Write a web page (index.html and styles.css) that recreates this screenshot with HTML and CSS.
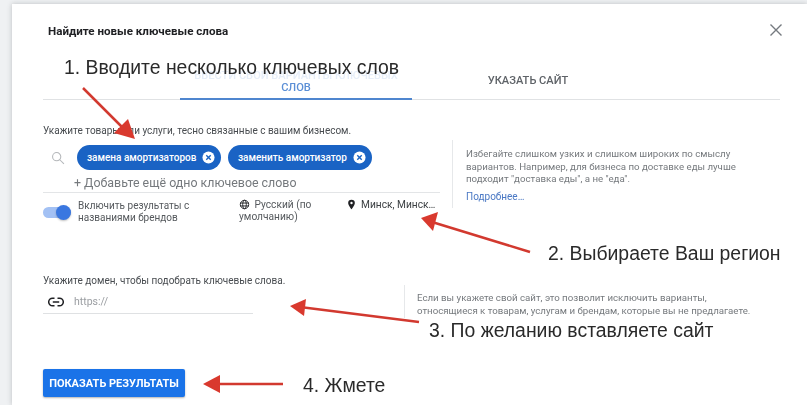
FILE: index.html
```html
<!DOCTYPE html>
<html lang="ru">
<head>
<meta charset="utf-8">
<title>Найдите новые ключевые слова</title>
<link rel="stylesheet" href="styles.css">
</head>
<body>
<main class="dialog">
  <header class="head">
    <h1 class="title">Найдите новые ключевые слова</h1>
    <svg class="close" viewBox="0 0 14 14"><path d="M1.5 1.5l11 11M12.5 1.5l-11 11"/></svg>
  </header>
  <nav class="tabs">
    <div class="tab active"><span class="faded">ВВЕСТИ СВОИ ВАРИАНТЫ КЛЮЧЕВЫХ</span><br>СЛОВ</div>
    <div class="tab">УКАЗАТЬ САЙТ</div>
  </nav>
  <section class="keywords">
    <div class="kw-main">
      <p class="label">Укажите товары или услуги, тесно связанные с вашим бизнесом.</p>
      <div class="chips">
        <svg class="search" viewBox="0 0 16 16"><circle cx="6.5" cy="6.5" r="4.7"/><path d="M10 10l4.8 4.8"/></svg>
        <span class="chip">замена амортизаторов<svg class="x" viewBox="0 0 14 14"><circle cx="7" cy="7" r="6.5"/><path d="M4.6 4.6l4.8 4.8M9.4 4.6l-4.8 4.8"/></svg></span>
        <span class="chip">заменить амортизатор<svg class="x" viewBox="0 0 14 14"><circle cx="7" cy="7" r="6.5"/><path d="M4.6 4.6l4.8 4.8M9.4 4.6l-4.8 4.8"/></svg></span>
      </div>
      <div class="add">+ Добавьте ещё одно ключевое слово</div>
      <div class="options">
        <div class="toggle"><span class="knob"></span></div>
        <div class="brand">Включить результаты с названиями брендов</div>
        <div class="lang"><svg class="ico" viewBox="0 0 12 12"><circle cx="6" cy="6" r="4.6"/><ellipse cx="6" cy="6" rx="2" ry="4.6"/><path d="M1.4 4.4h9.2M1.4 7.6h9.2"/></svg> Русский (по умолчанию)</div>
        <div class="loc"><svg class="pin" viewBox="0 0 10 12"><path fill-rule="evenodd" d="M5 .6a3.7 3.7 0 0 0-3.7 3.7C1.300 7 5 11.400 5 11.400S8.700 7 8.700 4.300A3.700 3.700 0 0 0 5 .6zm0 5a1.300 1.300 0 1 1 0-2.600 1.300 1.300 0 0 1 0 2.600z"/></svg><span>Минск, Минск…</span></div>
      </div>
    </div>
    <aside class="note note-kw">
      <p>Избегайте слишком узких и слишком широких по смыслу вариантов. Например, для бизнеса по доставке еды лучше подходит "доставка еды", а не "еда".</p>
      <a class="more">Подробнее…</a>
    </aside>
  </section>
  <section class="domain">
    <div class="dom-main">
      <p class="label">Укажите домен, чтобы подобрать ключевые слова.</p>
      <div class="url">
        <svg class="link" viewBox="0 0 16 10"><path d="M6.500 1.200H4.500a3.800 3.800 0 0 0 0 7.600h2M9.500 1.200h2a3.800 3.800 0 0 1 0 7.600h-2M4.800 5h6.400"/></svg>
        <span>https://</span>
      </div>
    </div>
    <aside class="note note-dom">Если вы укажете свой сайт, это позволит исключить варианты, относящиеся к товарам, услугам и брендам, которые вы не предлагаете.</aside>
  </section>
  <button class="submit">ПОКАЗАТЬ РЕЗУЛЬТАТЫ</button>
</main>

<svg class="arrows" viewBox="0 0 807 405">
  <g class="shaft">
    <path d="M83 88L125 130"/>
    <path d="M530 252L432 222"/>
    <path d="M419 322L300 307"/>
    <path d="M283 384L212 384"/>
  </g>
  <g class="tip">
    <path d="M135 139L114 133L128 119Z"/>
    <path d="M421 218L438 212L433 231Z"/>
    <path d="M290 306L306 299L304 316Z"/>
    <path d="M203 384L220 375L220 393Z"/>
  </g>
</svg>
<div class="ann a1">1. Вводите несколько ключевых слов</div>
<div class="ann a2">2. Выбираете Ваш регион</div>
<div class="ann a3">3. По желанию вставляете сайт</div>
<div class="ann a4">4. Жмете</div>
</body>
</html>
```
FILE: styles.css
```css
* { box-sizing: border-box; }
html, body { height: 100%; }
body {
  margin: 0;
  padding: 4px 0 0 12px;
  background: #eff1f3;
  overflow: hidden;
  position: relative;
  font-family: Roboto, "Liberation Sans", sans-serif;
  color: #3c4043;
}
p { margin: 0; }
.dialog {
  height: 401px;
  background: #fff;
  padding: 0 27px 0 31px;
  box-shadow: 0 0 5px rgba(60, 64, 67, .28);
  filter: blur(.35px);
}
.head {
  height: 53px;
  display: flex;
  justify-content: space-between;
  align-items: center;
  padding-left: 5px;
}
.title { margin: 0; font-size: 11.6px; font-weight: 700; color: #202124; }
.close { width: 14px; height: 14px; margin-right: -3px; margin-top: -1px; fill: none; stroke: #757a7f; stroke-width: 1.4; }
.tabs {
  display: flex;
  padding-left: 137px;
  height: 43px;
  border-bottom: 1px solid #e0e2e4;
  font-size: 11.1px;
  font-weight: 500;
  line-height: 12px;
  text-align: center;
}
.tab { width: 232px; height: 42px; color: #5f6368; }
.tab + .tab { padding-top: 18px; }
.tab.active {
  padding-top: 13px;
  height: 43px;
  color: #5b8fd6;
  border-bottom: 2px solid #4f86cf;
}
.faded { color: #e6eef9; white-space: nowrap; }
.keywords { display: flex; padding-top: 24px; }
.kw-main { width: 397px; }
.label { font-size: 10px; line-height: 13px; color: #484c50; white-space: nowrap; }
.chips { display: flex; align-items: center; margin-top: 8px; height: 25px; }
.search { width: 14px; height: 14px; margin: 0 12px 0 8px; fill: none; stroke: #b4b7ba; stroke-width: 1.2; flex: none; }
.chip {
  display: flex;
  align-items: center;
  justify-content: space-between;
  height: 25px;
  width: 144px;
  margin-right: 7px;
  padding: 0 6px 0 10px;
  border-radius: 13px;
  background: #1a63c4;
  color: #fff;
  font-size: 10px;
  font-weight: 500;
  white-space: nowrap;
}
.x { width: 13px; height: 13px; flex: none; }
.x circle { fill: #fff; }
.x path { stroke: #1a63c4; stroke-width: 1.5; fill: none; }
.add {
  height: 21px;
  padding-left: 31px;
  font-size: 12.4px;
  line-height: 21px;
  color: #75797d;
  border-bottom: 1px solid #e3e5e7;
  margin-top: 2px;
}
.options { display: flex; font-size: 10px; line-height: 12px; padding-top: 7px; color: #55595d; }
.toggle {
  position: relative;
  width: 28px;
  height: 11px;
  margin-top: 7px;
  margin-right: 7px;
  border-radius: 6px;
  background: #a3c1f4;
  flex: none;
}
.knob {
  position: absolute;
  right: 0;
  top: -2px;
  width: 15px;
  height: 15px;
  border-radius: 50%;
  background: #3a77e0;
  box-shadow: 0 1px 2px rgba(0,0,0,.25);
}
.brand { width: 134px; flex: none; padding-right: 10px; margin-right: 27px; }
.lang { width: 108px; flex: none; margin-top: -1px; font-size: 10.2px; }
.ico { width: 11px; height: 11px; fill: none; stroke: #202124; stroke-width: 1; vertical-align: -2px; margin-right: 2px; }
.loc { display: flex; gap: 5px; white-space: nowrap; margin-top: -1px; color: #3c4043; font-size: 10.2px; }
.pin { width: 9px; height: 11px; fill: #202124; flex: none; }
.note { font-size: 9.7px; color: #75797d; line-height: 12.5px; border-left: 1px solid #e6e8ea; }
.note-kw { margin: 16px 0 0 12px; padding: 8px 0 0 13px; width: 300px; height: 68px; }
.more { display: block; margin-top: 4px; color: #4a78c4; line-height: 13px; font-size: 10px; }
.domain { display: flex; padding-top: 50px; }
.dom-main { width: 210px; white-space: nowrap; }
.url {
  display: flex;
  align-items: center;
  height: 24px;
  margin-top: 3px;
  padding-left: 5px;
  border-bottom: 1px solid #dfe1e3;
  font-size: 10.5px;
  color: #9a9da1;
}
.link { width: 16px; height: 10px; margin-right: 10px; fill: none; stroke: #202124; stroke-width: 1.5; }
.note-dom { margin: 11px 0 0 151px; padding: 7px 0 0 12px; width: 353px; height: 33px; }
.submit {
  display: block;
  width: 142px;
  height: 28px;
  margin-top: 51px;
  padding: 0;
  border: 0;
  border-radius: 2px;
  background: #1a73e8;
  color: #fff;
  font: 700 11px Roboto, "Liberation Sans", sans-serif;
  box-shadow: 0 1px 2px rgba(0,0,0,.3);
}
.arrows { position: absolute; left: 0; top: 0; width: 807px; height: 405px; }
.shaft path { stroke: #d2392f; stroke-width: 2.5; fill: none; }
.tip path { fill: #d9392e; }
.ann {
  position: absolute;
  font-family: "Liberation Sans", Arial, sans-serif;
  font-size: 19.4px;
  line-height: 24px;
  color: #2a2a2a;
  white-space: nowrap;
}
.a1 { left: 64px; top: 55px; }
.a2 { left: 548px; top: 241px; }
.a3 { left: 429px; top: 318px; }
.a4 { left: 303px; top: 373px; }
```
